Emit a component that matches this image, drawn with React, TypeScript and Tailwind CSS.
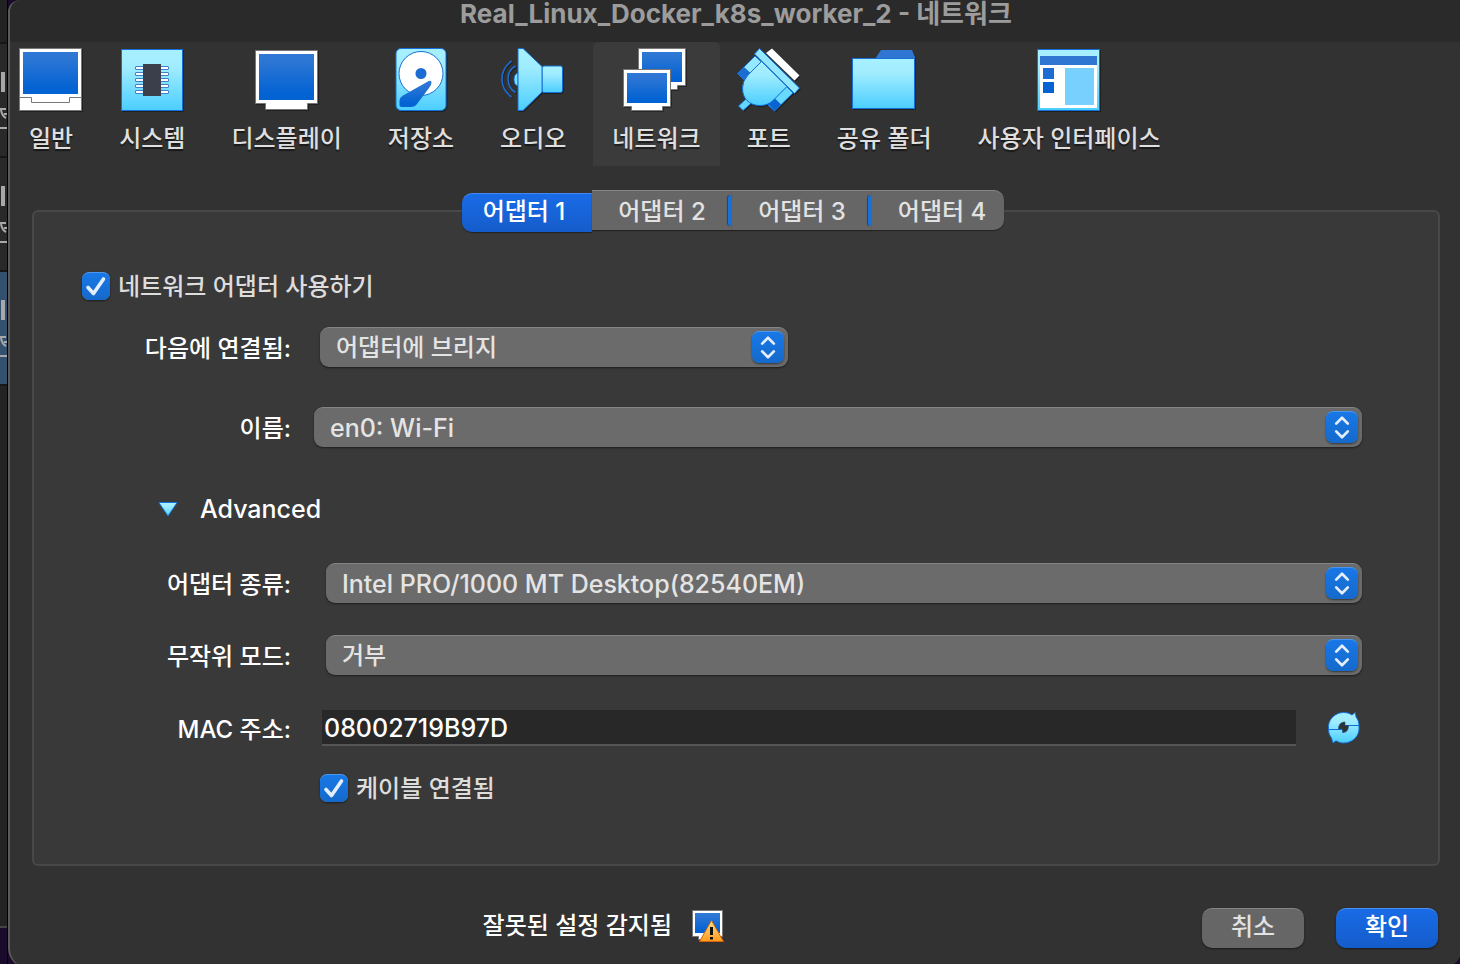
import React, { useState } from "react";

const OUTLINE = "#1470d6";

function Gradients() {
  return (
    <svg className="absolute h-0 w-0" aria-hidden="true">
      <defs>
        <linearGradient id="screen" x1="0" y1="0" x2="0" y2="1">
          <stop offset="0" stopColor="#3078d4" />
          <stop offset="0.2" stopColor="#2a75d4" />
          <stop offset="0.85" stopColor="#0463d3" />
          <stop offset="1" stopColor="#0463d3" />
        </linearGradient>
        <linearGradient id="aqua" x1="0" y1="0" x2="0" y2="1">
          <stop offset="0" stopColor="#a8f0ff" />
          <stop offset="0.3" stopColor="#a0ecff" />
          <stop offset="1" stopColor="#4bceff" />
        </linearGradient>
        <linearGradient id="amber" x1="0" y1="0" x2="0" y2="1">
          <stop offset="0" stopColor="#ffe18a" />
          <stop offset="1" stopColor="#ff9a1c" />
        </linearGradient>
      </defs>
    </svg>
  );
}

function Icon({ children }: { children: React.ReactNode }) {
  return (
    <svg
      viewBox="0 0 64 64"
      className="h-16 w-16 overflow-visible drop-shadow-[1px_1px_0px_rgba(0,0,0,0.35)]"
      aria-hidden="true"
    >
      {children}
    </svg>
  );
}

const GeneralIcon = () => (
  <Icon>
    <rect x="0.5" y="0.5" width="62" height="62" fill="#fff" stroke="#777" />
    <rect x="4" y="4" width="55" height="42" fill="url(#screen)" />
    <path d="M0 49.5H12.5V54.5H50.5V49.5H63" fill="none" stroke="#777" />
  </Icon>
);

const SystemIcon = () => (
  <Icon>
    <rect x="1.5" y="1.5" width="61" height="61" fill="url(#aqua)" stroke={OUTLINE} />
    {[18.5, 24.5, 30.5, 36.5, 42.5].map((y) => (
      <rect key={y} x="15.5" y={y} width="33" height="3" rx="0.5" fill="#fff" stroke="#3f80c8" />
    ))}
    <rect x="23" y="16" width="18" height="32" fill="#3a3f4b" />
  </Icon>
);

const DisplayIcon = () => (
  <Icon>
    <path d="M0.5 2.5H62.5V55.5H52.5V61.5H10.5V55.5H0.5Z" fill="#fff" stroke="#777" />
    <rect x="4" y="6" width="55" height="46" fill="url(#screen)" />
  </Icon>
);

const StorageIcon = () => (
  <Icon>
    <rect x="7" y="0.5" width="50" height="62" rx="5" fill="url(#aqua)" stroke={OUTLINE} />
    <circle cx="32" cy="25.5" r="22" fill="#fff" stroke={OUTLINE} />
    <circle cx="32" cy="25.5" r="5.5" fill="#1b6dd3" />
    <path
      d="M38 34Q42.500 31.500 42.500 34.500Q42.500 37 40 40L28 56Q26 59 22 59H12.500Q10.500 59 10.500 57V52Q11 49 14 47.500Z"
      fill="url(#screen)"
    />
  </Icon>
);

const AudioIcon = () => (
  <Icon>
    <path d="M10.500 13Q1 20 1 31T10.500 49" fill="none" stroke="#1b6dd3" strokeWidth="1.600" />
    <path d="M14.500 18Q7 22 7 31T14.500 44.500" fill="none" stroke="#1b6dd3" strokeWidth="1.600" />
    <path d="M17 25Q13 26 13 31.500T17 38Z" fill="#7fe0ff" stroke={OUTLINE} />
    <rect x="41" y="18" width="20.500" height="26.500" rx="2" fill="url(#aqua)" stroke={OUTLINE} />
    <path d="M17 0.500H22L41 18.500V44L22 62.500H17Z" fill="url(#aqua)" stroke={OUTLINE} />
  </Icon>
);

const NetworkIcon = () => (
  <Icon>
    <path d="M14.500 0.500H61.500V37.500H53.500V41.500H22.500V37.500H14.500Z" fill="#fff" stroke="#777" />
    <rect x="18" y="4" width="40" height="30" fill="url(#screen)" />
    <path d="M-0.500 21.500H46.500V58.500H38.500V62.500H7.500V58.500H-0.500Z" fill="#fff" stroke="#777" />
    <rect x="3" y="25" width="40" height="30" fill="url(#screen)" />
  </Icon>
);

const PortsIcon = () => (
  <Icon>
    <path d="M35 0.500L62.500 27.500L57.500 32.500L29 5Z" fill="#fff" />
    <path d="M10 50L1.500 58L6 62.500L15 54.500Z" fill="#62d6ff" stroke={OUTLINE} />
    <path d="M0.500 25.500L18 8L24.500 14L7 32Z" fill="#94e8ff" stroke={OUTLINE} />
    <path d="M0.500 25.500L7 19L13.500 25L7 32Z" fill="#1c6cd2" />
    <path d="M49.500 38.500L56 45L37.500 63L31 57Z" fill="#68d9ff" stroke={OUTLINE} />
    <path d="M31 56L37.500 50L44 56.500L37.500 63Z" fill="#0963d0" />
    <path
      d="M24.500 13.500L11 27Q5.500 33 5.500 40Q5.500 48 10 52.500Q15 57.500 23 57.500Q31 57.500 36 52.500L50 38.500Z"
      fill="url(#aqua)"
      stroke={OUTLINE}
    />
    <path d="M22.500 0.500L62.500 40L57.500 45.500L17.500 6Z" fill="#93e8ff" stroke={OUTLINE} />
  </Icon>
);

const FolderIcon = () => (
  <Icon>
    <path d="M23 11L29 2H60L63 9V11Z" fill="#2f76d2" />
    <rect x="0.500" y="10.500" width="62" height="50" fill="url(#aqua)" stroke={OUTLINE} />
  </Icon>
);

const InterfaceIcon = () => (
  <Icon>
    <rect x="0.500" y="1.500" width="62" height="61" fill="url(#aqua)" stroke={OUTLINE} />
    <rect x="3" y="8" width="57" height="9" fill="#2f76d2" />
    <rect x="3" y="17" width="57" height="43" fill="#fff" />
    <rect x="6" y="20" width="11" height="11" fill="#1c6cd3" />
    <rect x="6" y="34" width="11" height="11" fill="#0463d3" />
    <rect x="28" y="20" width="29" height="37" fill="#78d0ff" />
  </Icon>
);

const sections = [
  { label: "일반", Glyph: GeneralIcon },
  { label: "시스템", Glyph: SystemIcon },
  { label: "디스플레이", Glyph: DisplayIcon },
  { label: "저장소", Glyph: StorageIcon },
  { label: "오디오", Glyph: AudioIcon },
  { label: "네트워크", Glyph: NetworkIcon },
  { label: "포트", Glyph: PortsIcon },
  { label: "공유 폴더", Glyph: FolderIcon },
  { label: "사용자 인터페이스", Glyph: InterfaceIcon },
];

function Toolbar() {
  const [active, setActive] = useState("네트워크");
  return (
    <nav className="flex gap-2">
      {sections.map(({ label, Glyph }) => (
        <button
          key={label}
          type="button"
          onClick={() => setActive(label)}
          className={`flex h-[124px] shrink-0 flex-col items-center rounded-t-md px-[19px] pt-1.5 whitespace-nowrap ${
            active === label ? "bg-[#3b3b3b]" : ""
          }`}
        >
          <span className="-mx-4 flex justify-center">
            <Glyph />
          </span>
          <span className="mt-[9px] text-2xl leading-9 text-[#dfdfdf] [text-shadow:0_2px_1px_rgba(0,0,0,0.5)]">
            {label}
          </span>
        </button>
      ))}
    </nav>
  );
}

const adapters = ["어댑터 1", "어댑터 2", "어댑터 3", "어댑터 4"];

function AdapterTabs() {
  const [active, setActive] = useState(0);
  return (
    <div role="tablist" className="flex h-[42px] items-start">
      {adapters.map((name, i) => {
        const selected = i === active;
        const shape =
          i === 0 ? "rounded-l-[10px] w-[130px] pr-1.5" : i === 3 ? "rounded-r-[10px] w-[132px] pl-2" : "w-[140px]";
        const paint = selected
          ? "mt-[3px] h-[39px] pb-[3px] border-[#4288f0] bg-linear-to-b from-[#196be6] to-[#145ccb] text-white"
          : "h-10 pt-0.5 border-[#858585] bg-[#666666] text-[#e2e2e2]";
        return (
          <button
            key={name}
            type="button"
            role="tab"
            aria-selected={selected}
            onClick={() => setActive(i)}
            className={`relative flex items-center justify-center border-t text-2xl leading-9 font-medium shadow-[0_1px_1px_rgba(0,0,0,0.4)] ${shape} ${paint}`}
          >
            {i > 1 && (
              <span className="absolute top-1 -left-1 z-10 h-[31px] w-[3px] rounded-l-full bg-[#1971d8] shadow-[-1px_0_1px_rgba(0,0,0,0.4)]" />
            )}
            {name}
          </button>
        );
      })}
    </div>
  );
}

function Check({ id, label }: { id: string; label: string }) {
  return (
    <div className="flex items-center gap-2">
      <span className="relative h-7 w-7">
        <input
          id={id}
          type="checkbox"
          defaultChecked
          className="peer block h-7 w-7 appearance-none rounded-[7px] bg-[#6b6b6b] shadow-[0_1px_2px_rgba(0,0,0,0.5)] checked:border-t checked:border-[#4b97ee] checked:bg-linear-to-b checked:from-[#1878e6] checked:to-[#1569cb]"
        />
        <svg
          viewBox="0 0 28 28"
          className="pointer-events-none absolute inset-0 hidden h-7 w-7 peer-checked:block"
          aria-hidden="true"
        >
          <path d="M6 15.500L11.500 21.500L21.500 7" fill="none" stroke="#e4eefc" strokeWidth="3.600" strokeLinecap="round" strokeLinejoin="round" />
        </svg>
      </span>
      <label htmlFor={id} className="pt-0.5 text-2xl leading-9 text-[#dddddd]">
        {label}
      </label>
    </div>
  );
}

function Popup({ id, options, latin = false }: { id: string; options: string[]; latin?: boolean }) {
  return (
    <div className="relative h-10 w-full">
      <select
        id={id}
        className={`block h-10 w-full appearance-none rounded-[9px] border-t border-[#858585] bg-[#6b6b6b] pr-12 pl-4 font-medium text-[#e4e4e4] shadow-[0_1px_2px_rgba(0,0,0,0.5)] ${
          latin ? "pt-0.5 text-[25px]" : "text-2xl"
        }`}
      >
        {options.map((o) => (
          <option key={o}>{o}</option>
        ))}
      </select>
      <svg
        viewBox="0 0 32 32"
        className="pointer-events-none absolute top-1 right-1 h-8 w-8 rounded-[7px] border-t border-[#4b97ee] bg-linear-to-b from-[#1878e6] to-[#1569cb] shadow-[0_1px_2px_rgba(0,0,0,0.5)]"
        aria-hidden="true"
      >
        <path d="M10 12L16 6L22 12M10 20L16 26L22 20" fill="none" stroke="#e4eefc" strokeWidth="2.800" strokeLinecap="round" strokeLinejoin="round" />
      </svg>
    </div>
  );
}

function FieldLabel({ htmlFor, children }: { htmlFor: string; children: React.ReactNode }) {
  return (
    <label htmlFor={htmlFor} className="w-[257px] shrink-0 pt-1 text-right text-2xl leading-9 whitespace-nowrap text-white">
      {children}
    </label>
  );
}

function RefreshIcon() {
  return (
    <svg viewBox="0 0 32 32" className="h-8 w-8 overflow-visible" aria-hidden="true">
      <path
        d="M15.500 0.500C19 0.500 21.500 1.300 24 3L27.300 0.500L28 5C30 7.500 31 10.500 31 13.500V18C30 26 23 31 15.500 31C12.500 31 10 30 8 28.800L5 31L3.500 26C1.500 23.500 0.500 20.500 0.500 17.500V13.500C1.500 6 8 0.500 15.500 0.500Z"
        fill="url(#aqua)"
        stroke={OUTLINE}
      />
      <path d="M14 13.500H31M0.500 17.500H15" stroke={OUTLINE} />
      <path
        d="M17 10C13 10 10.500 12.500 10.500 17H14.500V20.500C18.500 20.500 20.500 18 20.500 13.500H17Z"
        fill="#2f3338"
        stroke="#24506f"
        strokeWidth="0.600"
      />
    </svg>
  );
}

function NetworkPanel() {
  const [expanded, setExpanded] = useState(true);
  return (
    <section className="-mt-[22px] min-h-[656px] w-full rounded-md border-2 border-[#484848] bg-[#393939] pt-14 pb-14">
      <div className="flex h-9 items-center pl-[48px]">
        <Check id="enabled" label="네트워크 어댑터 사용하기" />
      </div>
      <div className="mt-[23px] flex h-10 items-center gap-[29px]">
        <FieldLabel htmlFor="attached">다음에 연결됨:</FieldLabel>
        <div className="w-[468px]">
          <Popup id="attached" options={["어댑터에 브리지"]} />
        </div>
      </div>
      <div className="mt-10 flex h-10 items-center gap-[23px] pr-[76px]">
        <FieldLabel htmlFor="name">이름:</FieldLabel>
        <Popup id="name" options={["en0: Wi-Fi"]} latin />
      </div>
      <button
        type="button"
        aria-expanded={expanded}
        onClick={() => setExpanded(!expanded)}
        className="mt-11 ml-[124px] flex h-9 items-center gap-[22px] text-[25px] leading-9 font-medium text-white"
      >
        <svg viewBox="0 0 20 16" className="h-4 w-5" aria-hidden="true">
          <path d="M0.800 1.500H19.200L10 15Z" fill="url(#aqua)" stroke={OUTLINE} />
        </svg>
        Advanced
      </button>
      {expanded && (
        <>
          <div className="mt-9 flex h-10 items-center gap-[35px] pr-[76px]">
            <FieldLabel htmlFor="type">어댑터 종류:</FieldLabel>
            <Popup id="type" options={["Intel PRO/1000 MT Desktop(82540EM)"]} latin />
          </div>
          <div className="mt-8 flex h-10 items-center gap-[35px] pr-[76px]">
            <FieldLabel htmlFor="promiscuous">무작위 모드:</FieldLabel>
            <Popup id="promiscuous" options={["거부"]} />
          </div>
          <div className="mt-[33px] flex h-10 items-center pr-[78px]">
            <FieldLabel htmlFor="mac">MAC 주소:</FieldLabel>
            <input
              id="mac"
              defaultValue="08002719B97D"
              className="ml-[31px] h-9 min-w-0 flex-1 border-b-2 border-[#555555] bg-[#282828] px-0.5 pt-1 text-[25px] font-medium text-white outline-none"
            />
            <button type="button" aria-label="MAC 주소 새로 고침" className="ml-8">
              <RefreshIcon />
            </button>
          </div>
          <div className="mt-[22px] flex h-9 items-center pl-[286px]">
            <Check id="cable" label="케이블 연결됨" />
          </div>
        </>
      )}
    </section>
  );
}

function Footer() {
  return (
    <footer className="mt-[42px] flex h-10 items-center pr-0.5">
      <div className="flex flex-1 items-center justify-end gap-5 pb-1">
        <span className="text-2xl leading-9 text-white">잘못된 설정 감지됨</span>
        <svg viewBox="0 0 32 32" className="h-8 w-8" aria-hidden="true">
          <path d="M0.500 0.500H30.500V26.500H24.500V29.500H6.500V26.500H0.500Z" fill="#fff" stroke="#777" />
          <rect x="3" y="3" width="25" height="20" fill="url(#screen)" />
          <path d="M19.500 10.500L31.500 31.500H7.500Z" fill="url(#amber)" stroke="#d3620b" strokeLinejoin="round" />
          <path d="M18 17H21V25H18ZM18 27H21V29.500H18Z" fill="#111" />
        </svg>
      </div>
      <div className="flex w-[714px] justify-end gap-8">
        <button
          type="button"
          className="h-10 w-[102px] rounded-[10px] border-t border-[#858585] bg-[#666666] pb-1 text-2xl leading-9 text-[#e2e2e2] shadow-[0_1px_2px_rgba(0,0,0,0.5)]"
        >
          취소
        </button>
        <button
          type="button"
          className="h-10 w-[102px] rounded-[10px] border-t border-[#4b90f2] bg-linear-to-b from-[#196be6] to-[#145ccb] pb-1 text-2xl leading-9 text-white shadow-[0_1px_2px_rgba(0,0,0,0.5)]"
        >
          확인
        </button>
      </div>
    </footer>
  );
}

function MachineRow({ selected = false }: { selected?: boolean }) {
  return (
    <div className={`h-[114px] border-t-2 border-[#171717] pt-7 ${selected ? "bg-[#34506f]" : "bg-[#292929]"}`}>
      <div className="h-5 w-[5px] border-r-4 border-[#a8a8a8]" />
      <svg viewBox="0 0 7 24" className="mt-3.5 h-6 w-[7px]" aria-hidden="true">
        <path d="M0 3H6M1 4Q2 10 6 12M4 8H7M0 22H7" fill="none" stroke="#a8a8a8" strokeWidth="2" />
      </svg>
    </div>
  );
}

export default function App() {
  return (
    <div
      className="flex min-h-screen overflow-hidden bg-[#1a0b2c] font-medium"
      style={{ fontFamily: 'Inter, "Noto Sans CJK KR", sans-serif' }}
    >
      <Gradients />
      <aside className="flex w-2 shrink-0 flex-col overflow-hidden border-r border-black pb-9">
        <div className="h-[42px] bg-[#222222]" />
        <MachineRow />
        <MachineRow />
        <MachineRow selected />
        <div className="flex-1 border-y-2 border-t-[#171717] border-b-[#444444] bg-[#232323]" />
      </aside>
      <main className="-mr-0.5 -mb-1 flex min-w-0 flex-1 flex-col rounded-tl-xl rounded-b-[20px] border-l-2 border-[#5a5a5a] bg-[#323232]">
        <header className="h-[42px] rounded-tl-xl bg-[#2a2a2a] text-center text-[26px] leading-7 font-bold text-[#9c9c9c]">
          Real_Linux_Docker_k8s_worker_2 - 네트워크
        </header>
        <Toolbar />
        <div className="flex flex-1 flex-col pt-6 pr-[22px] pb-5 pl-[22px]">
          <div className="z-10 flex justify-center pr-[6px]">
            <AdapterTabs />
          </div>
          <NetworkPanel />
          <Footer />
        </div>
      </main>
    </div>
  );
}
